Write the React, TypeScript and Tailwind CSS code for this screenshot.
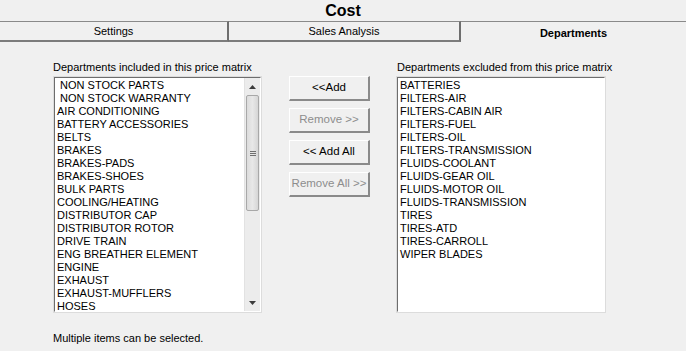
import React from 'react';

const included = [
    ' NON STOCK PARTS',
    ' NON STOCK WARRANTY',
    'AIR CONDITIONING',
    'BATTERY ACCESSORIES',
    'BELTS',
    'BRAKES',
    'BRAKES-PADS',
    'BRAKES-SHOES',
    'BULK PARTS',
    'COOLING/HEATING',
    'DISTRIBUTOR CAP',
    'DISTRIBUTOR ROTOR',
    'DRIVE TRAIN',
    'ENG BREATHER ELEMENT',
    'ENGINE',
    'EXHAUST',
    'EXHAUST-MUFFLERS',
    'HOSES',
];

const excluded = [
    'BATTERIES',
    'FILTERS-AIR',
    'FILTERS-CABIN AIR',
    'FILTERS-FUEL',
    'FILTERS-OIL',
    'FILTERS-TRANSMISSION',
    'FLUIDS-COOLANT',
    'FLUIDS-GEAR OIL',
    'FLUIDS-MOTOR OIL',
    'FLUIDS-TRANSMISSION',
    'TIRES',
    'TIRES-ATD',
    'TIRES-CARROLL',
    'WIPER BLADES',
];

const ListBox: React.FC<{ items: string[]; scroll?: boolean; width: string }> = ({ items, scroll, width }) => (
    <div className={`${width} h-[235px] flex bg-white border-t border-l border-t-[#6d6d6d] border-l-[#6d6d6d] border-b border-r border-b-white border-r-white outline outline-1 outline-[#dcdcdc]`}>
        <div className="flex-1 pl-[2px] pt-[1px] overflow-hidden">
            {items.map((item, i) => (
                <div key={i} className="h-[13px] leading-[13px] text-[11px] text-black whitespace-pre">
                    {item}
                </div>
            ))}
        </div>
        {scroll && (
            <div className="w-[16px] h-full flex flex-col bg-[#ececec] border-l border-[#e2e2e2]">
                <div className="h-[17px] flex items-center justify-center">
                    <svg width="7" height="4" viewBox="0 0 7 4"><path d="M3.5 0 L7 4 L0 4 Z" fill="#3c3c3c" /></svg>
                </div>
                <div className="mx-[1px] h-[116px] flex items-center justify-center bg-gradient-to-r from-[#dcdcdc] via-[#e8e8e8] to-[#d6d6d6] border border-[#a8a8a8] rounded-[2px]">
                    <div className="flex flex-col gap-[1px]">
                        <div className="w-[6px] h-[1px] bg-[#707070]" />
                        <div className="w-[6px] h-[1px] bg-[#707070]" />
                        <div className="w-[6px] h-[1px] bg-[#707070]" />
                    </div>
                </div>
                <div className="flex-1" />
                <div className="h-[17px] flex items-center justify-center">
                    <svg width="7" height="4" viewBox="0 0 7 4"><path d="M0 0 L7 0 L3.5 4 Z" fill="#3c3c3c" /></svg>
                </div>
            </div>
        )}
    </div>
);

const Btn: React.FC<{ label: string; disabled?: boolean }> = ({ label, disabled }) => (
    <div className={`w-[81px] h-[25px] flex items-center justify-center whitespace-nowrap text-[11.5px] bg-[#f0f0f0] border-t border-l border-t-white border-l-white border-b-2 border-r-2 border-b-[#8a8a8a] border-r-[#8a8a8a] ${disabled ? 'text-[#8d8d8d]' : 'text-black'}`}>
        {label}
    </div>
);

const Tab: React.FC<{ label: string; width: string; selected?: boolean; last?: boolean }> = ({ label, width, selected, last }) => (
    <div
        className={`${width} h-[21px] flex items-center justify-center text-[11px] text-black border-t border-[#8a8a8a] ${
            selected ? 'font-bold border-b-0 pt-[2px]' : 'border-b-2 border-b-[#7c7c7c]'
        } ${last ? '' : 'border-r-2 border-r-[#6e6e6e]'}`}
    >
        {label}
    </div>
);

export default function App() {
    return (
        <div className="w-[686px] h-[351px] bg-[#f0f0f0] overflow-hidden" style={{ fontFamily: '"Liberation Sans", Arial, sans-serif' }}>
            <div className="h-[21px] pt-[2px] text-center text-[16px] leading-[18px] font-bold text-black">Cost</div>
            <div className="flex">
                <Tab label="Settings" width="w-[229px]" />
                <Tab label="Sales Analysis" width="w-[232px]" />
                <Tab label="Departments" width="w-[225px]" selected last />
            </div>
            <div className="flex pl-[54px] pt-[19px]">
                <div className="flex flex-col">
                    <div className="h-[16px] text-[11px] leading-[13px] text-black -ml-[1px]">Departments included in this price matrix</div>
                    <ListBox items={included} scroll width="w-[207px]" />
                </div>
                <div className="ml-[28px] mt-[15px] flex flex-col gap-[7px]">
                    <Btn label="<<Add" />
                    <Btn label="Remove >>" disabled />
                    <Btn label="<< Add All" />
                    <Btn label="Remove All >>" disabled />
                </div>
                <div className="ml-[27px] flex flex-col">
                    <div className="h-[16px] text-[11px] leading-[13px] text-black">Departments excluded from this price matrix</div>
                    <ListBox items={excluded} width="w-[208px]" />
                </div>
            </div>
            <div className="pl-[53px] pt-[20px] text-[11px] leading-[13px] text-black">Multiple items can be selected.</div>
        </div>
    );
}
